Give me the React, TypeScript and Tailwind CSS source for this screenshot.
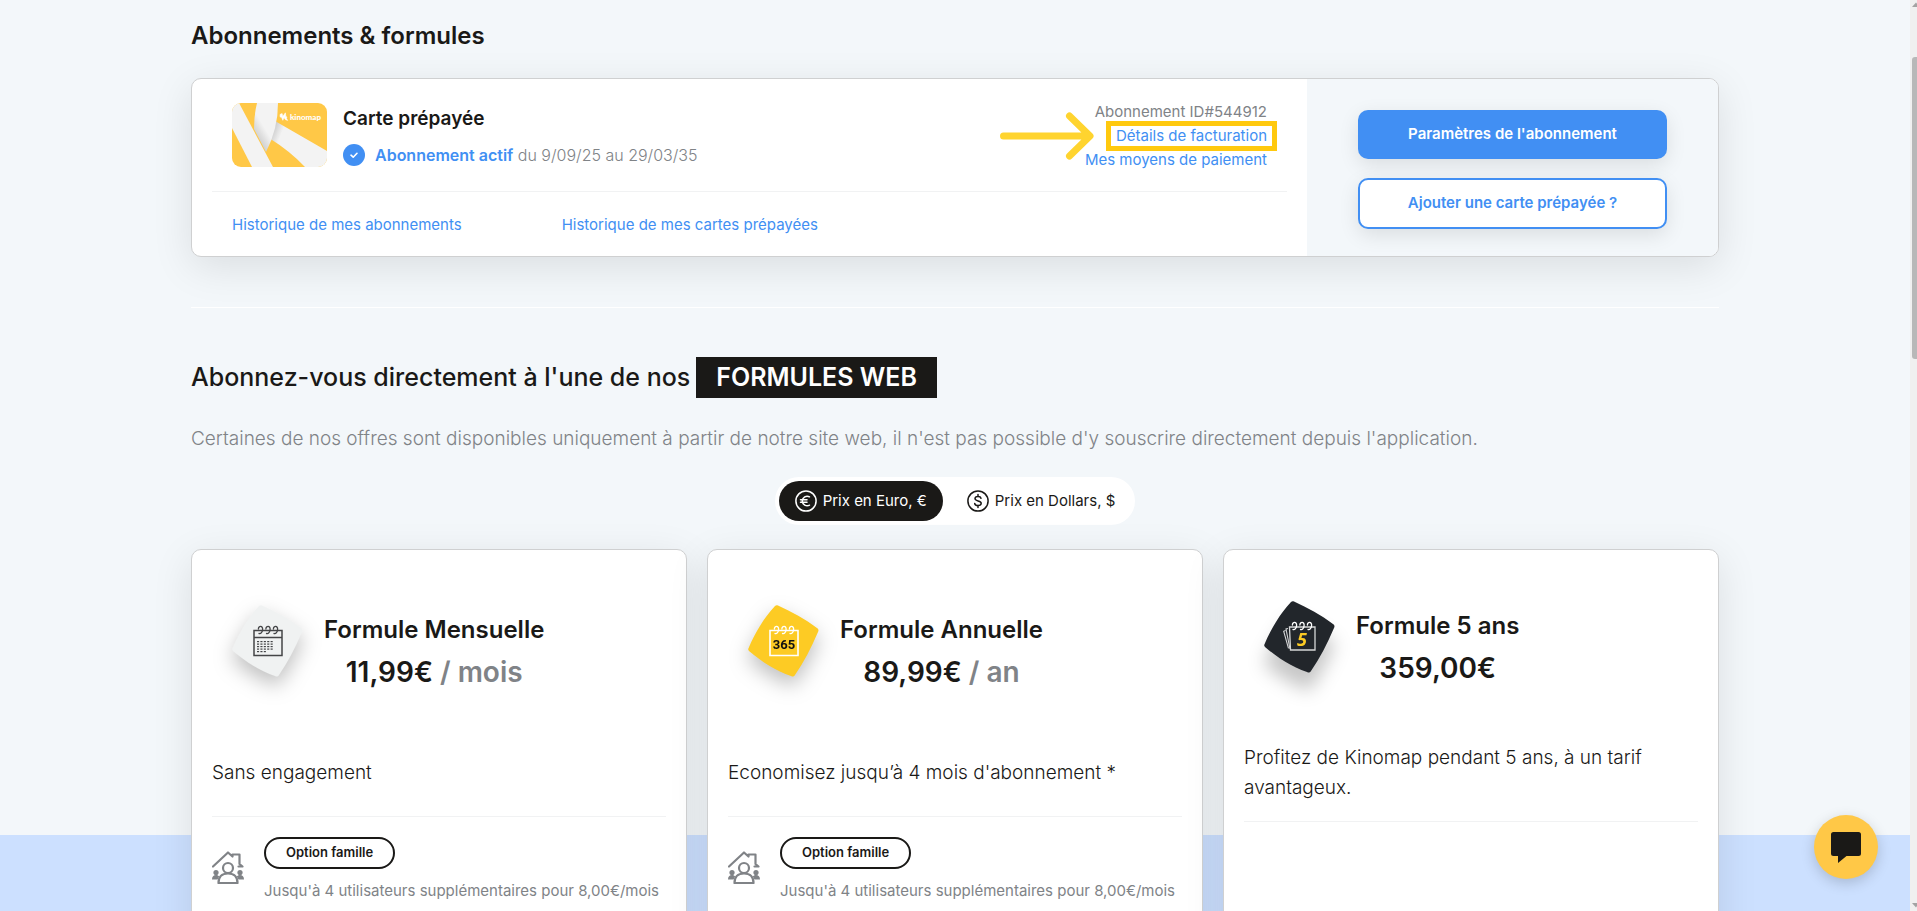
import type { ReactNode } from "react";

const DIAMOND =
  "M27 1 C28 0 29 0 30 .6 C44 7 57 14 69 23 C70.500 24 71 25.500 70 27 C63 43 56 57 47 70 C46 71.500 45 72 43 71 C28 66 14 57 1 46 C0 45 0 44 .6 43 C8 26 16 13 27 1 Z";

function Diamond({ fill, dark, children }: { fill: string; dark?: boolean; children: ReactNode }) {
  return (
    <svg
      viewBox="0 0 72 72"
      className={
        dark
          ? "size-[72px] shrink-0 overflow-visible drop-shadow-[0_18px_9px_rgba(0,0,0,0.22)]"
          : "size-[72px] shrink-0 overflow-visible drop-shadow-[0_9px_10px_rgba(0,0,0,0.25)]"
      }
      aria-hidden="true"
    >
      <path d={DIAMOND} fill={fill} />
      {children}
    </svg>
  );
}

function Rings({ stroke, x = 0 }: { stroke: string; x?: number }) {
  return (
    <g fill="none" stroke={stroke} strokeWidth="1.300" strokeLinecap="round">
      {[27, 34.5, 42].map((cx) => (
        <path key={cx} d={`M${cx + x - 1.6} 24 C${cx + x - 1.6} 20.500 ${cx + x + 3} 20.500 ${cx + x + 2.6} 24.500 C${cx + x + 2.4} 27 ${cx + x + 1} 29 ${cx + x - 1} 28.500`} />
      ))}
    </g>
  );
}

function MonthIcon() {
  const rows = [5, 5, 5, 5, 3];
  return (
    <Diamond fill="#f0f2f2">
      <path d="M22 25.500h28v25H22zM22 32.500h28" fill="none" stroke="#444547" strokeWidth="1.500" />
      <Rings stroke="#444547" x={1} />
      {rows.map((n, r) =>
        Array.from({ length: n }, (_, c) => (
          <rect key={`${r}-${c}`} x={25 + c * 3.4} y={36 + r * 2.5} width="2.100" height="1.200" fill="#444547" />
        )),
      )}
    </Diamond>
  );
}

function YearIcon() {
  return (
    <Diamond fill="#fdcb24">
      <path d="M22 25.500h28v25H22z" fill="none" stroke="#fff" strokeWidth="1.600" />
      <Rings stroke="#fff" x={1} />
      <text x="36" y="44" textAnchor="middle" fontFamily="Roboto, sans-serif" fontWeight="700" fontSize="13" fill="#111">
        365
      </text>
    </Diamond>
  );
}

function FiveYearsIcon() {
  return (
    <Diamond fill="#22262b" dark>
      <path d="M25.500 26h25.500v23H26.500z" fill="none" stroke="#d6d7d8" strokeWidth="1.300" />
      <path d="M24 27.500l-2 .5 4 20M21.500 29.500l-1.800.8 4.800 17" fill="none" stroke="#d6d7d8" strokeWidth="1.100" />
      <Rings stroke="#fff" x={3} />
      <text x="38" y="45" textAnchor="middle" fontFamily="'Open Sans', sans-serif" fontStyle="italic" fontWeight="700" fontSize="18" fill="#fdcb24">
        5
      </text>
    </Diamond>
  );
}

function PrepaidCardArt() {
  return (
    <svg viewBox="0 0 95 64" className="h-16 w-[95px] shrink-0 rounded-[9px]" role="img" aria-label="kinomap">
      <defs>
        <linearGradient id="fold" gradientUnits="userSpaceOnUse" x1="27" y1="38" x2="37" y2="32">
          <stop offset="0" stopColor="#cfcfcf" />
          <stop offset="1" stopColor="#f3f3f3" />
        </linearGradient>
        <linearGradient id="leg" gradientUnits="userSpaceOnUse" x1="39" y1="28" x2="49" y2="32">
          <stop offset="0" stopColor="#c8c8c8" />
          <stop offset="1" stopColor="#f3f3f3" />
        </linearGradient>
      </defs>
      <rect width="95" height="64" fill="#ffc847" />
      <path d="M43 18 L95 48 V64 H73 Q58 48 37 35 Z" fill="url(#leg)" />
      <path d="M25 0 H46 Q46 26 34 49 L22 26 Q22 12 25 0 Z" fill="url(#fold)" />
      <path d="M0 0 H7 L41 64 H20 L0 25 Z" fill="#f3f3f3" />
      <path d="M48 11.500l2.100-1 .7 3 2.600-3.700.5 3.900 1.200.3-.8 1 1.300 2.400-2.300-.9-1.200-1.900-1.300 2.700-1.300-3-1.300-.2z" fill="#fff" stroke="#fff" strokeWidth="0.600" />
      <text x="58" y="16.500" fontFamily="Lato, sans-serif" fontWeight="900" fontSize="8" fill="#fff">
        kinomap
      </text>
    </svg>
  );
}

function FamilyIcon() {
  return (
    <svg viewBox="0 0 32 33" className="mt-3.5 h-[33px] w-8 shrink-0" fill="none" stroke="#808387" strokeWidth="2.200" aria-hidden="true">
      <path d="M1 15.500 16 1.500l4.500 4V3.500h7v9.500l3 2.500h-4" strokeLinejoin="round" strokeLinecap="round" />
      <circle cx="16" cy="17" r="5" />
      <path d="M6.500 32c0-6 3.500-9.500 9.500-9.500s9.500 3.500 9.500 9.500z" strokeLinejoin="round" />
      <g fill="#808387" stroke="none">
        <circle cx="4" cy="21.500" r="2.600" />
        <circle cx="28" cy="21.500" r="2.600" />
        <path d="M0 28.500c0-3 1.500-4.500 4-4.500 1.500 0 2.600.6 3.200 1.500L5.500 28.500zM32 28.500c0-3-1.500-4.500-4-4.500-1.500 0-2.600.6-3.200 1.500l1.700 3z" />
      </g>
    </svg>
  );
}

function CoinIcon({ kind }: { kind: "euro" | "dollar" }) {
  return (
    <svg viewBox="0 0 22 22" className="size-[22px] shrink-0" fill="none" stroke="currentColor" strokeLinecap="round" strokeLinejoin="round" aria-hidden="true">
      <circle cx="11" cy="11" r="10.100" strokeWidth="1.500" />
      {kind === "euro" ? (
        <path strokeWidth="1.500" d="M14.500 6.800A4.900 4.900 0 0 0 7.300 11a4.900 4.900 0 0 0 7.200 4.200M5.500 9.700h6.500M5.500 12.300h6.500" />
      ) : (
        <path strokeWidth="1.500" d="M14 8.300C13.700 7 12.500 6.400 11 6.400c-1.700 0-3 .8-3 2.200 0 3.200 6.200 1.500 6.200 4.700 0 1.500-1.400 2.300-3.200 2.300-1.700 0-3-.7-3.300-2.100M11 4.600v1.800M11 15.600v1.800" />
      )}
    </svg>
  );
}

type Plan = {
  name: string;
  price: string;
  period?: string;
  text: string;
  icon: ReactNode;
  family?: string;
};

const plans: Plan[] = [
  {
    name: "Formule Mensuelle",
    price: "11,99€",
    period: "/ mois",
    text: "Sans engagement",
    icon: <MonthIcon />,
    family: "Jusqu'à 4 utilisateurs supplémentaires pour 8,00€/mois",
  },
  {
    name: "Formule Annuelle",
    price: "89,99€",
    period: "/ an",
    text: "Economisez jusqu’à 4 mois d'abonnement *",
    icon: <YearIcon />,
    family: "Jusqu'à 4 utilisateurs supplémentaires pour 8,00€/mois",
  },
  {
    name: "Formule 5 ans",
    price: "359,00€",
    text: "Profitez de Kinomap pendant 5 ans, à un tarif avantageux.",
    icon: <FiveYearsIcon />,
  },
];

function PlanCard({ plan }: { plan: Plan }) {
  return (
    <article className="flex min-h-[480px] flex-1 flex-col rounded-[10px] border border-[#cfd0d1] bg-white px-5 shadow-[0_10px_40px_rgba(0,0,0,0.1)]">
      <div className={plan.family ? "flex items-start gap-5 pt-[55px] pl-5" : "flex items-start gap-5 pt-[51px] pl-5"}>
        {plan.icon}
        <div className="pt-1 text-center font-semibold">
          <h3 className="text-2xl leading-[42px]">{plan.name}</h3>
          <p className="text-[28px] leading-[42px]">
            {plan.price} {plan.period && <span className="text-[#808387]">{plan.period}</span>}
          </p>
        </div>
      </div>
      <p
        className={
          plan.family
            ? "mt-[65px] border-b border-[#f1f2f3] pb-7 text-[19px] leading-[30px] font-light"
            : "mt-[54px] border-b border-[#f1f2f3] pb-[18px] text-[19px] leading-[30px] font-light"
        }
      >
        {plan.text}
      </p>
      {plan.family && (
        <div className="flex items-start gap-5 pt-5">
          <FamilyIcon />
          <div>
            <button type="button" className="h-8 rounded-full border-2 border-[#1a1917] px-5 text-[13px] font-semibold">
              Option famille
            </button>
            <p className="mt-2.5 text-[15px] leading-6 whitespace-nowrap text-[#808387]">{plan.family}</p>
          </div>
        </div>
      )}
    </article>
  );
}

export default function App() {
  return (
    <div className="flex h-screen overflow-hidden bg-[#f3f7fa] font-['Inter',sans-serif] text-[#1a1917]">
      <main className="relative min-w-0 flex-1 overflow-hidden">
        <div className="mx-auto w-4/5">
          <h1 className="pt-[17px] text-2xl leading-[38px] font-semibold">Abonnements &amp; formules</h1>

          <section className="mt-[23px] flex overflow-hidden rounded-[10px] border border-[#cfd0d1] bg-white shadow-[0_10px_40px_rgba(0,0,0,0.1)]">
            <div className="flex-1 px-5">
              <div className="flex items-start justify-between border-b border-[#f1f2f3] px-5 pt-[21px] pb-[19px]">
                <div className="flex items-center gap-4 pt-[3px]">
                  <PrepaidCardArt />
                  <div>
                    <h2 className="text-[19px] leading-8 font-semibold">Carte prépayée</h2>
                    <p className="mt-2 flex items-center gap-2.5 text-base leading-6 font-light text-[#808387]">
                      <svg viewBox="0 0 22 22" className="size-[22px]" aria-hidden="true">
                        <circle cx="11" cy="11" r="11" fill="#418ff3" />
                        <path d="M8 11.200l2.200 2L14 9.300" fill="none" stroke="#fff" strokeWidth="1.600" strokeLinecap="round" strokeLinejoin="round" />
                      </svg>
                      <span>
                        <strong className="font-semibold text-[#418ff3]">Abonnement actif</strong> du 9/09/25 au 29/03/35
                      </span>
                    </p>
                  </div>
                </div>
                <div className="flex flex-col items-end text-[15px] leading-6 text-[#808387]">
                  <span>Abonnement ID#544912</span>
                  <a href="#facturation" className="relative text-[#418ff3]">
                    Détails de facturation
                    <span className="absolute -inset-x-2.5 -inset-y-[3px] border-[5px] border-[#ffc90e]" />
                    <svg viewBox="0 0 94 48" className="absolute top-1/2 right-full mr-[22px] h-12 w-[94px] max-w-none -translate-y-1/2" fill="none" stroke="#ffd42f" strokeWidth="7" strokeLinecap="round" strokeLinejoin="round" aria-hidden="true">
                      <path d="M3.500 24H89M69.500 4 90 24 69.500 44" />
                    </svg>
                  </a>
                  <a href="#paiement" className="text-[#418ff3]">Mes moyens de paiement</a>
                </div>
              </div>
              <div className="flex gap-[100px] px-5 pt-[21px] pb-[19px] text-[15px] leading-6 text-[#418ff3]">
                <a href="#abonnements">Historique de mes abonnements</a>
                <a href="#cartes">Historique de mes cartes prépayées</a>
              </div>
            </div>
            <div className="flex w-[411px] flex-col items-center justify-center gap-[19px] bg-[#f3f7fa] pt-1 text-[15px] font-semibold">
              <button type="button" className="h-[49px] w-3/4 rounded-[10px] bg-[#418ff3] text-white shadow-[0_6px_20px_rgba(0,0,0,0.1)]">
                Paramètres de l'abonnement
              </button>
              <button type="button" className="h-[51px] w-3/4 rounded-[10px] border-2 border-[#418ff3] bg-white text-[#418ff3] shadow-[0_6px_20px_rgba(0,0,0,0.1)]">
                Ajouter une carte prépayée ?
              </button>
            </div>
          </section>

          <hr className="mt-[50px] border-white" />

          <h2 className="mt-[49px] flex items-center gap-1.5 text-[25px] leading-[41px] font-medium">
            Abonnez-vous directement à l'une de nos
            <span className="bg-[#1a1917] px-5 font-semibold text-white">FORMULES WEB</span>
          </h2>
          <p className="mt-[26px] text-[19px] leading-[30px] font-light text-[#808387]">
            Certaines de nos offres sont disponibles uniquement à partir de notre site web, il n'est pas possible d'y souscrire directement depuis l'application.
          </p>

          <div className="mt-[23px] flex justify-center">
            <div className="flex rounded-full bg-white p-1 text-[15px]">
              <button type="button" className="flex h-10 items-center gap-1.5 rounded-full bg-[#1a1917] px-4 text-white">
                <CoinIcon kind="euro" />
                Prix en Euro, €
              </button>
              <button type="button" className="flex h-10 items-center gap-1.5 rounded-full pr-4 pl-6">
                <CoinIcon kind="dollar" />
                Prix en Dollars, $
              </button>
            </div>
          </div>
        </div>

        <section className="relative mt-6">
          <div className="absolute inset-x-0 top-[286px] bottom-0 bg-[#cce0ff]" />
          <div className="relative mx-auto flex w-4/5 gap-5">
            {plans.map((plan) => (
              <PlanCard key={plan.name} plan={plan} />
            ))}
          </div>
        </section>

        <button
          type="button"
          aria-label="Chat"
          className="absolute right-8 bottom-8 flex size-16 items-center justify-center rounded-full bg-[#ffc847] shadow-[0_4px_14px_rgba(0,0,0,0.18)]"
        >
          <svg viewBox="0 0 30 31" className="h-[31px] w-[30px]" fill="#1a1917" aria-hidden="true">
            <path d="M2.500 0h25A2.500 2.500 0 0 1 30 2.500v19a2.500 2.500 0 0 1-2.500 2.500H15.500L7 31v-7H2.500A2.500 2.500 0 0 1 0 21.500v-19A2.500 2.500 0 0 1 2.500 0z" />
          </svg>
        </button>
      </main>

      <div className="flex w-[7px] flex-col justify-between overflow-hidden bg-[#f0f0f0] pl-0.5" aria-hidden="true">
        <svg viewBox="0 0 5 57" className="h-[57px] w-[5px]" fill="#a3a3a3">
          <path d="M0 7 4 2.500 5 3.500V7z" />
        </svg>
        <div className="mb-auto h-[302px] rounded-l-[3px] bg-[#b8b8b8]" />
        <svg viewBox="0 0 5 10" className="h-2.5 w-[5px]" fill="#a3a3a3">
          <path d="M0 2h5v3L4 6.500z" />
        </svg>
      </div>
    </div>
  );
}
